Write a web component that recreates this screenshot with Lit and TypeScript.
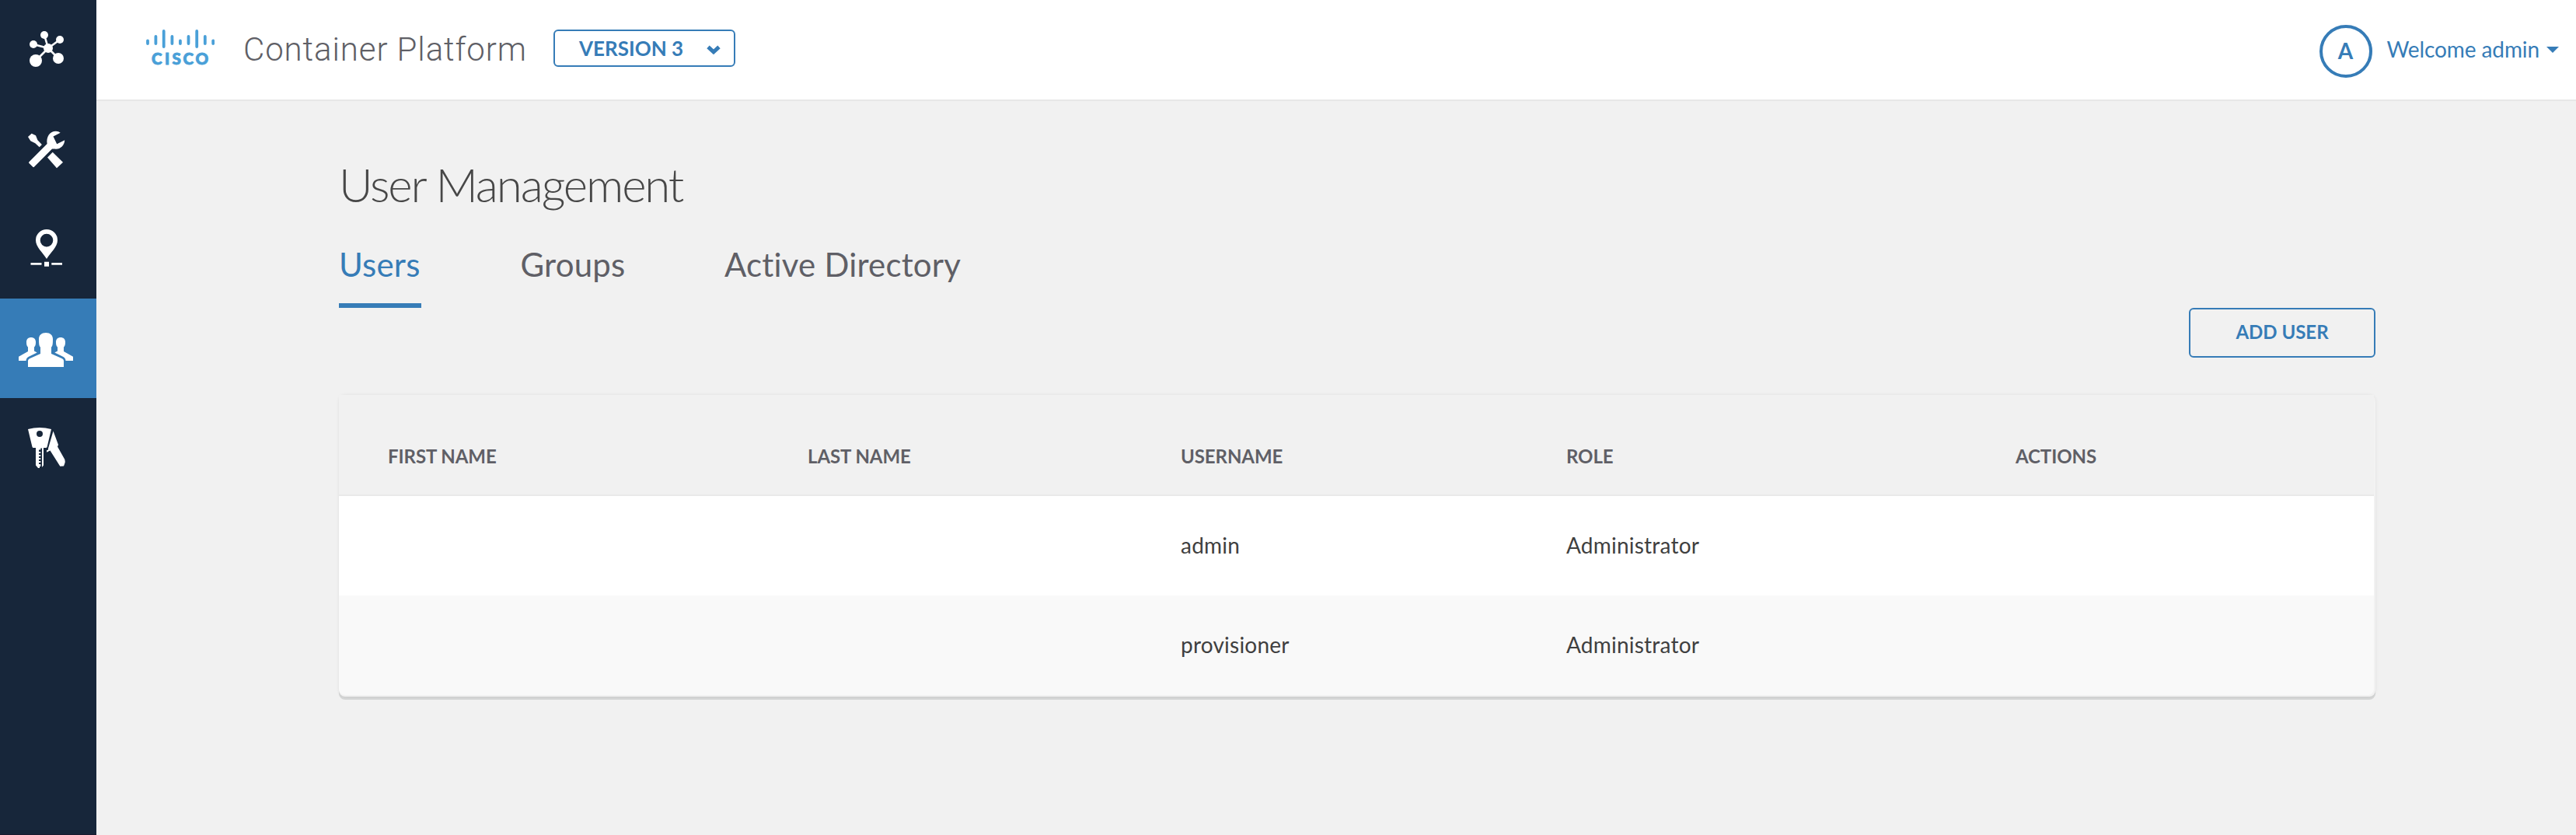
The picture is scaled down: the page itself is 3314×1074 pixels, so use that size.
import { LitElement, html, css, svg } from "lit";
import { customElement } from "lit/decorators.js";
import { classMap } from "lit/directives/class-map.js";

const icons = {
  clusters: svg`
    <g stroke="#fff" stroke-width="2.6">
      <path d="M62 62L57 45M62 62L77 51M62 62L43 57M62 62L46 78M62 62L75 75" />
    </g>
    <circle cx="62" cy="62" r="6" /><circle cx="57" cy="45" r="5" /><circle cx="77" cy="51" r="5" />
    <circle cx="43" cy="57" r="5" /><circle cx="46" cy="78" r="8" /><circle cx="75" cy="75" r="7" />`,
  tools: svg`
    <path d="M36 48L40.7 43.8L46 46.3L48.4 52.3L53.9 57.9L50.7 61.2L45.3 56.3L39.3 53.3Z" />
    <path d="M67.7 67.7L81 80.7L73 88.2L61 74.6Z" />
    <path d="M37.4 80.2L60.6 57C59.2 48 64 40.7 72 40.7C74.2 40.7 76 41.4 77.7 42.7L68.5 47.6L73.2 57.3L83.2 52.2C83 59.4 77 64.6 70 63.6L67 63.5L43.6 87L42.6 87L37 81.6Z" />`,
  location: svg`
    <path fill-rule="evenodd" d="M60 77C55 68.5 46 62 46 53A14 14 0 0 1 74 53C74 62 65 68.5 60 77ZM60 44.8A8.3 8.3 0 1 0 60 61.4A8.3 8.3 0 1 0 60 44.8Z" />
    <path d="M39.5 82H53.5V84.8H39.5ZM57 80.7H63V86.7H57ZM66.3 82H80V84.8H66.3Z" />`,
  users: svg`
    <path d="M52 62.5C50.3 61 50 58.5 50 52C50 47 53.5 44 59 44S68 47 68 52C68 58.5 67.7 61 66 62.5V71L80 77.3Q82 78.5 82 80V88H36V80Q36 78.5 38 77.3L52 71Z" />
    <path d="M36 62.5C34.3 61 34 59 34 56C34 52 36.5 50 40 50S46 52 46 56C46 59 45.7 61 44 62.5V67.5L47.7 69.5L37 74.8Q33.5 76.8 33.5 80H24V74.7L36 68Z" />
    <path d="M82 62.5C83.7 61 84 59 84 56C84 52 81.5 50 78 50S72 52 72 56C72 59 72.3 61 74 62.5V67.5L70.3 69.5L81 74.8Q84.5 76.8 84.5 80H94V74.7L82 68Z" />`,
  keys: svg`
    <path fill-rule="evenodd" d="M36 40Q51 36 66 40L60.7 62.5Q60.3 64 59 64H56V86.5L54 89V64.5H52.3V66.5H50V69H52.3V71H50V73H52.3V75H50V77H52.3V79H50V81H52.3V83H50V85H52.3V88H51V90H49L46 86.5V64H43Q41.8 64 41.4 62.5ZM51 42A4 4 0 1 0 51 50A4 4 0 1 0 51 42Z" />
    <path d="M68.5 42.5L75 60L74 62.5L83.3 79Q84.2 82 83.3 84L82 87.5L77.3 87.7L64.5 67.5L60 69.7V67.3L62 66.5V64.7Z" />`,
};

@customElement("nav-rail")
class NavRail extends LitElement {
  static styles = css`
    :host { display: block; width: 124px; background: #17263a; border-bottom: 1px solid #1b1a30; }
    .item { height: 128px; }
    .active { background: #367cb7; }
    .icon { display: block; width: 124px; height: 128px; fill: #fff; }
  `;
  render() {
    return Object.entries(icons).map(
      ([name, art]) => html`<div class=${classMap({ item: true, active: name === "users" })}>
        <svg class="icon" viewBox="0 0 124 128">${art}</svg>
      </div>`
    );
  }
}

const bars = [
  [190, 50.5, 58], [200.4, 45, 58], [210.7, 38, 62], [221.4, 45, 58], [231.9, 50.5, 58],
  [242.5, 45, 58], [253.2, 38, 62], [263.8, 45, 58], [274.2, 50.5, 58],
];

@customElement("top-bar")
class TopBar extends LitElement {
  static styles = css`
    :host {
      display: flex; align-items: center; box-sizing: border-box; height: 130px;
      padding: 0 22px 0 64px; background: #fff; border-bottom: 2px solid #e7e7e7; color: #367cb7;
    }
    .logo { width: 88px; height: 48px; flex: none; margin-bottom: 4px; }
    .mark { fill: #4aa0d8; }
    .word { font: 900 20.5px Lato, sans-serif; fill: #4aa0d8; stroke: #4aa0d8; stroke-width: 0.9px; }
    .product {
      flex: none; width: 436px; box-sizing: border-box; padding-left: 37px; white-space: nowrap;
      font: 300 42px/48px Roboto, sans-serif; letter-spacing: 0.9px; color: #5f5f66;
    }
    .version {
      display: flex; flex: none; align-items: center; box-sizing: border-box; width: 234px; height: 48px;
      border: 2px solid #367cb7; border-radius: 6px; padding: 0 17px 0 31px; margin-bottom: 4px;
      font-weight: 700; font-size: 26px; line-height: 44px; justify-content: space-between; white-space: nowrap;
    }
    .chevron { width: 18px; height: 12px; margin-top: 3px; }
    .avatar {
      box-sizing: border-box; width: 68px; height: 68px; border: 4px solid #367cb7; border-radius: 50%;
      margin: 4px 19px 0 auto; text-align: center; font-weight: 700; font-size: 28px; line-height: 58px;
    }
    .welcome { font-size: 28px; line-height: 34px; margin-bottom: 2px; letter-spacing: -0.1px; white-space: nowrap; }
    .caret { width: 16px; height: 8px; margin-left: 9px; }
  `;
  render() {
    return html`
      <svg class="logo" viewBox="188 38 88 48">
        <g class="mark">
          ${bars.map(([x, a, b]) => svg`<rect x=${x - 1.9} y=${a} width="3.8" height=${b - a} rx="1.9" />`)}
        </g>
        <text class="word" y="83.3" x="195 212.1 221.4 235.6 251.6">CISCO</text>
      </svg>
      <div class="product">Container Platform</div>
      <div class="version">
        <span>VERSION 3</span>
        <svg class="chevron" viewBox="0 0 18 12">
          <path d="M2 2.3L9 8.8L16 2.3" fill="none" stroke="#367cb7" stroke-width="5" />
        </svg>
      </div>
      <div class="avatar">A</div>
      <span class="welcome">Welcome admin</span>
      <svg class="caret" viewBox="0 0 16 8"><path d="M0 0H16L8 8Z" fill="#367cb7" /></svg>
    `;
  }
}

const columns = ["FIRST NAME", "LAST NAME", "USERNAME", "ROLE", "ACTIONS"];
const users = [
  ["", "", "admin", "Administrator", ""],
  ["", "", "provisioner", "Administrator", ""],
];

@customElement("user-page")
class UserPage extends LitElement {
  static styles = css`
    :host { display: block; padding: 71px 258px 0 312px; }
    .title {
      margin: 0; font-weight: 300; font-size: 60px; line-height: 72px; color: #474747;
      letter-spacing: -2.1px;
    }
    .tabs {
      display: flex; gap: 127.5px; margin-top: 39px; font-size: 42px; line-height: 56px;
      letter-spacing: 0.2px; color: #5f5f66;
    }
    .tab { height: 84px; box-sizing: border-box; white-space: nowrap; }
    .current { min-width: 106px; color: #367cb7; border-bottom: 6px solid #367cb7; }
    .actions { display: flex; justify-content: flex-end; }
    .add {
      box-sizing: border-box; width: 240px; height: 64px; border: 2px solid #367cb7; border-radius: 6px;
      color: #367cb7; font-weight: 700; font-size: 24px; line-height: 57px; text-align: center;
    }
    .panel {
      margin-top: 48px; padding: 0 2px 2px 0; border-radius: 8px; background: #f2f2f2;
      box-shadow: 0 0 4px rgba(0, 0, 0, 0.08), 0 4px 0 #d6d7d7;
    }
    .table { border-radius: 0 0 8px 8px; overflow: hidden; }
    .row {
      display: grid; grid-template-columns: 540px 480px 496px 578px 1fr; height: 128px; line-height: 126px;
      font-size: 28px; letter-spacing: 0.22px; color: #3f3f40; background: #fff;
    }
    .alt { background: #f9f9f9; }
    .head {
      background: #f1f1f1; height: 130px; box-sizing: border-box; border-bottom: 2px solid #e9e9e9;
      padding-top: 32px; line-height: 93px; font-size: 24px; font-weight: 700; letter-spacing: -0.08px; color: #5f5f66;
    }
    .cell { padding-left: 63px; white-space: nowrap; }
  `;
  render() {
    return html`
      <h1 class="title">User Management</h1>
      <div class="tabs">
        <div class="tab current">Users</div>
        <div class="tab">Groups</div>
        <div class="tab">Active Directory</div>
      </div>
      <div class="actions"><div class="add">ADD USER</div></div>
      <div class="panel">
        <div class="table">
          <div class="row head">${columns.map((c) => html`<div class="cell">${c}</div>`)}</div>
          ${users.map(
            (user, i) => html`<div class=${classMap({ row: true, alt: i % 2 === 1 })}>
              ${user.map((value) => html`<div class="cell">${value}</div>`)}
            </div>`
          )}
        </div>
      </div>
    `;
  }
}

@customElement("app-root")
class AppRoot extends LitElement {
  static styles = css`
    :host {
      display: grid; grid-template-columns: 124px 1fr; height: 1074px; overflow: hidden;
      background: #f1f1f1; font-family: Lato, sans-serif; font-variant-ligatures: none;
    }
  `;
  render() {
    return html`<nav-rail></nav-rail><main><top-bar></top-bar><user-page></user-page></main>`;
  }
}
